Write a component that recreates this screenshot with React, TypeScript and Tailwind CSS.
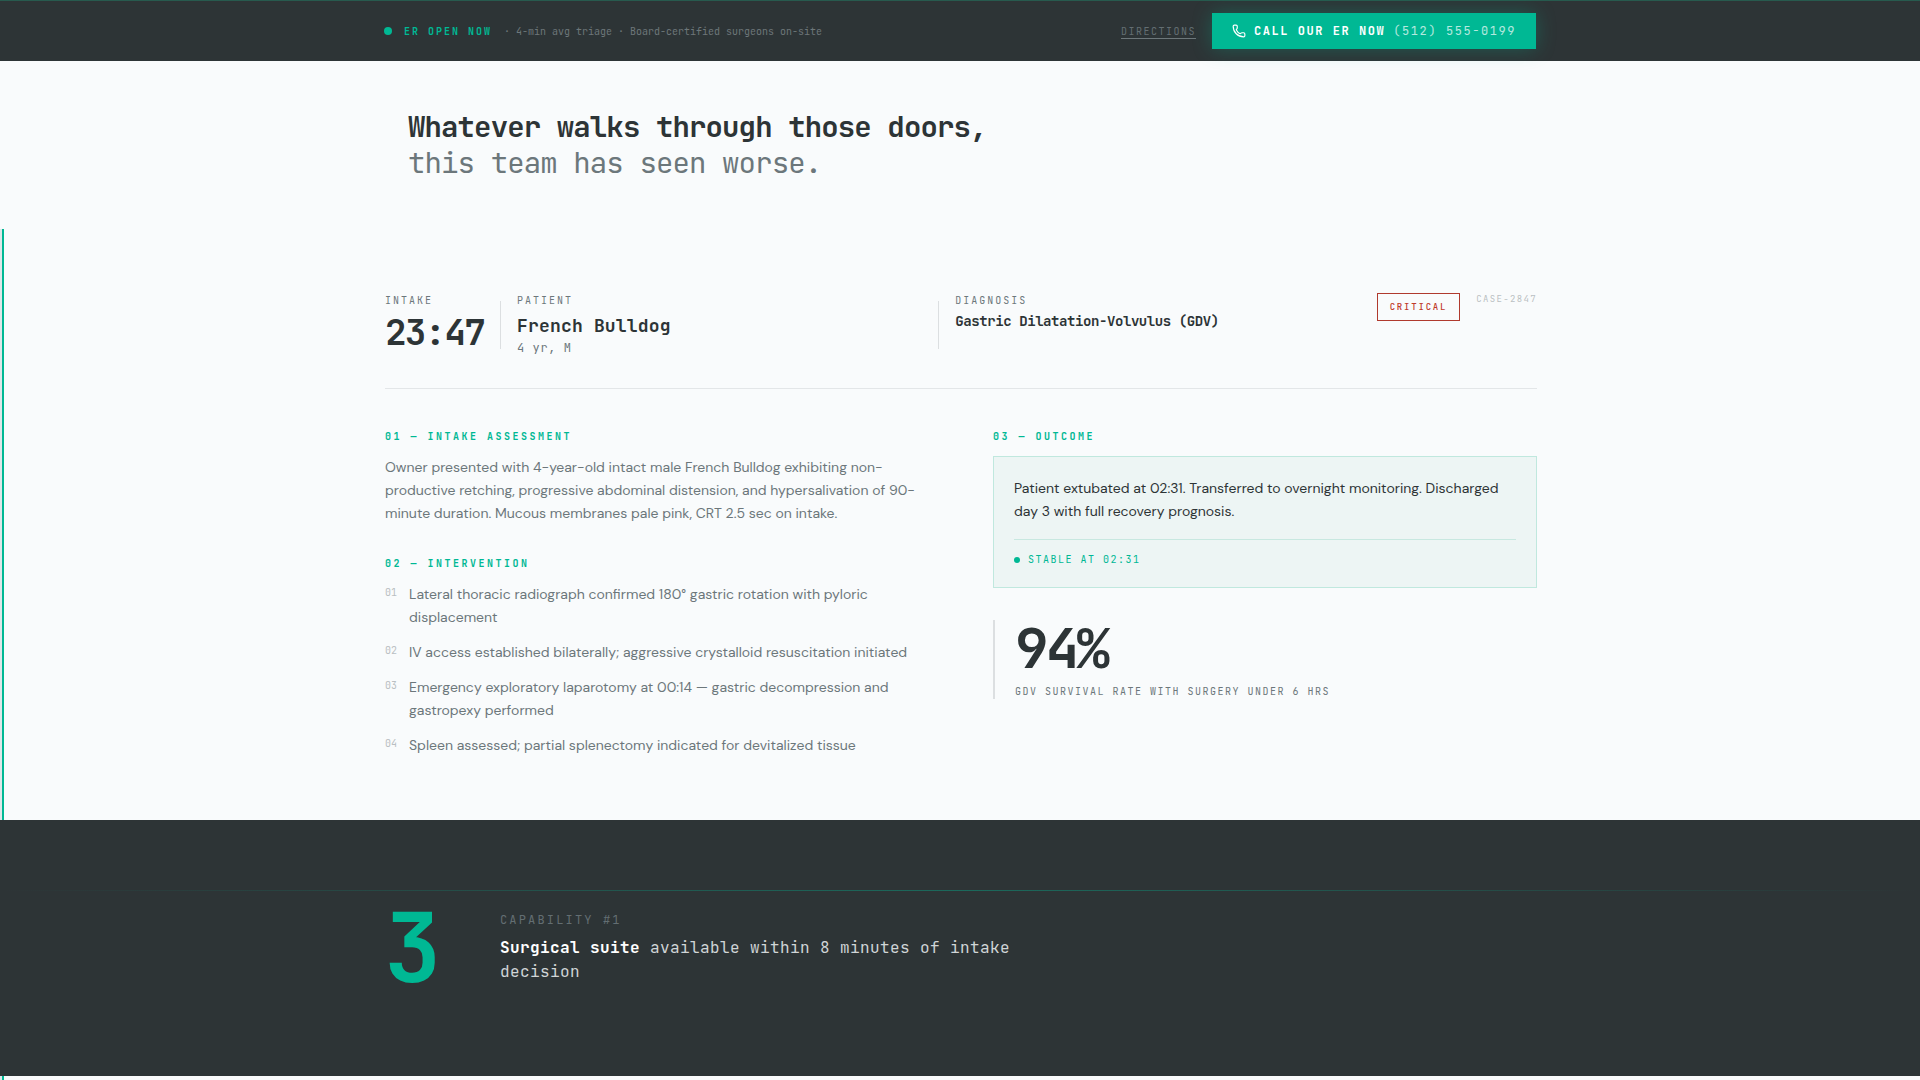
import type { ReactNode } from "react";
import { Phone } from "lucide-react";

const steps = [
  "Lateral thoracic radiograph confirmed 180° gastric rotation with pyloric displacement",
  "IV access established bilaterally; aggressive crystalloid resuscitation initiated",
  "Emergency exploratory laparotomy at 00:14 — gastric decompression and gastropexy performed",
  "Spleen assessed; partial splenectomy indicated for devitalized tissue",
];

function Label({ children }: { children: ReactNode }) {
  return <p className="mb-[5px] text-[10px] leading-4 tracking-[0.2em] text-[#6c777b]">{children}</p>;
}

function SectionTitle({ children }: { children: ReactNode }) {
  return (
    <h3 className="mb-[11px] text-[10px] leading-4 font-bold tracking-[0.25em] text-[#00b894]">{children}</h3>
  );
}

function Divider() {
  return <div className="mt-2 h-12 w-px shrink-0 bg-[#dcdfe1]" />;
}

function Header() {
  return (
    <header className="border-t border-[#275a4e] bg-[#2d3436] px-6">
      <div className="mx-auto flex max-w-6xl items-center justify-between py-3">
        <div className="flex items-center gap-3 text-[10px] leading-[17px]">
          <span className="size-2 rounded-full bg-[#00b894]" />
          <span className="font-bold tracking-[0.2em] text-[#00b894]">ER OPEN NOW</span>
          <span className="text-[#6d777a]">· 4-min avg triage · Board-certified surgeons on-site</span>
        </div>
        <div className="flex items-center gap-4">
          <a
            href="#directions"
            className="border-b border-[#6d777a] pt-0.5 text-[10px] leading-3 tracking-[0.15em] text-[#636e72]"
          >
            DIRECTIONS
          </a>
          <a
            href="tel:5125550199"
            className="flex h-9 items-center gap-2 bg-[#00b894] px-5 text-xs tracking-[0.13em] text-white shadow-[0_0_20px_rgba(0,184,148,0.3)]"
          >
            <Phone size={14} strokeWidth={2} />
            <span className="font-bold">CALL OUR ER NOW</span>
            <span className="opacity-70">(512) 555-0199</span>
          </a>
        </div>
      </div>
    </header>
  );
}

function CaseHeader() {
  return (
    <div className="flex items-start gap-4 border-b border-[#e3e6e8] pb-[30px]">
      <div>
        <Label>INTAKE</Label>
        <p className="text-4xl leading-9 font-bold tracking-[-0.05em]">23:47</p>
      </div>
      <Divider />
      <div className="flex-1">
        <Label>PATIENT</Label>
        <p className="text-lg leading-6 font-semibold tracking-[0.01em]">French Bulldog</p>
        <p className="text-xs leading-5 tracking-[0.05em] text-[#6c777b]">4 yr, M</p>
      </div>
      <Divider />
      <div className="flex-1">
        <Label>DIAGNOSIS</Label>
        <p className="text-sm leading-[14px] font-bold tracking-[-0.03em]">Gastric Dilatation-Volvulus (GDV)</p>
      </div>
      <span className="border border-[#b03a2e] px-3 py-1.5 text-[9px] leading-[14px] font-medium tracking-[0.2em] text-[#c0392b]">
        CRITICAL
      </span>
      <span className="text-[9px] leading-3 tracking-[0.15em] text-[#b9bfc2]">CASE-2847</span>
    </div>
  );
}

function Outcome() {
  return (
    <div>
      <SectionTitle>03 — OUTCOME</SectionTitle>
      <div className="border border-[#c0e8de] bg-[#edf5f4] p-5">
        <p className="font-['DM_Sans','Roboto',sans-serif] text-sm leading-[23px]">
          Patient extubated at 02:31. Transferred to overnight monitoring. Discharged day 3 with full recovery
          prognosis.
        </p>
        <p className="mt-4 flex items-center gap-2 border-t border-[#c8e8e0] pt-3 text-[10px] leading-[15px] tracking-[0.15em] text-[#00b894]">
          <span className="size-1.5 rounded-full bg-[#00b894]" />
          STABLE AT 02:31
        </p>
      </div>
      <div className="mt-8 border-l-2 border-[#dcdfe1] pl-5">
        <p className="text-[56px] leading-[56px] font-bold tracking-[-0.05em]">94%</p>
        <p className="mt-2 text-[10px] leading-[15px] tracking-[0.15em] text-[#6c777b]">
          GDV SURVIVAL RATE WITH SURGERY UNDER 6 HRS
        </p>
      </div>
    </div>
  );
}

export default function App() {
  return (
    <div className="flex min-h-screen flex-col bg-[#f9fbfc] font-['JetBrains_Mono','DejaVu_Sans_Mono',monospace] text-[#2d3436]">
      <Header />
      <main className="flex flex-1 flex-col">
        <section className="mx-auto w-full max-w-6xl px-6 py-12">
          <h1 className="text-[29px] leading-9 font-bold tracking-[-0.03em]">
            Whatever walks through those doors,
            <br />
            <span className="font-normal text-[#6c777b]">this team has seen worse.</span>
          </h1>
        </section>

        <article className="border-l-2 border-[#dfe6e9]">
          <div className="border-l-2 border-[#00b894] pr-0.5">
            <div className="mx-auto max-w-6xl pt-16 pb-[63px]">
              <CaseHeader />
              <div className="mt-10 grid grid-cols-2 gap-16">
                <div>
                  <SectionTitle>01 — INTAKE ASSESSMENT</SectionTitle>
                  <p className="mb-[31px] font-['DM_Sans','Roboto',sans-serif] text-sm leading-[23px] text-[#6c777b]">
                    Owner presented with 4-year-old intact male French Bulldog exhibiting non-productive retching,
                    progressive abdominal distension, and hypersalivation of 90-minute duration. Mucous membranes
                    pale pink, CRT 2.5 sec on intake.
                  </p>
                  <SectionTitle>02 — INTERVENTION</SectionTitle>
                  <ol className="flex flex-col gap-3">
                    {steps.map((step, i) => (
                      <li key={step} className="flex gap-3">
                        <span className="pt-0.5 text-[10px] leading-4 text-[#b9bfc2]">0{i + 1}</span>
                        <span className="font-['DM_Sans','Roboto',sans-serif] text-sm leading-[23px] text-[#6c777b]">
                          {step}
                        </span>
                      </li>
                    ))}
                  </ol>
                </div>
                <Outcome />
              </div>
            </div>
          </div>
        </article>

        <section className="bg-[#2d3436] pt-[70px] pb-20">
          <div className="h-px bg-[linear-gradient(90deg,transparent,#00b894,transparent)] opacity-40" />
          <div className="mx-auto mt-[9px] flex max-w-6xl items-center gap-8">
            <p className="w-[84px] text-8xl leading-none font-bold text-[#00b894]">3</p>
            <div className="max-w-[520px]">
              <p className="mb-2 text-xs tracking-[0.18em] text-[#636e72]">CAPABILITY #1</p>
              <p className="text-base leading-6 tracking-wide">
                <strong className="font-bold text-white">Surgical suite</strong>{" "}
                <span className="text-[#d0d5d6]">available within 8 minutes of intake decision</span>
              </p>
            </div>
          </div>
        </section>

        <div className="flex-1 border-l-2 border-[#dfe6e9]">
          <div className="h-full min-h-1 border-l-2 border-[#00b894]" />
        </div>
      </main>
    </div>
  );
}
